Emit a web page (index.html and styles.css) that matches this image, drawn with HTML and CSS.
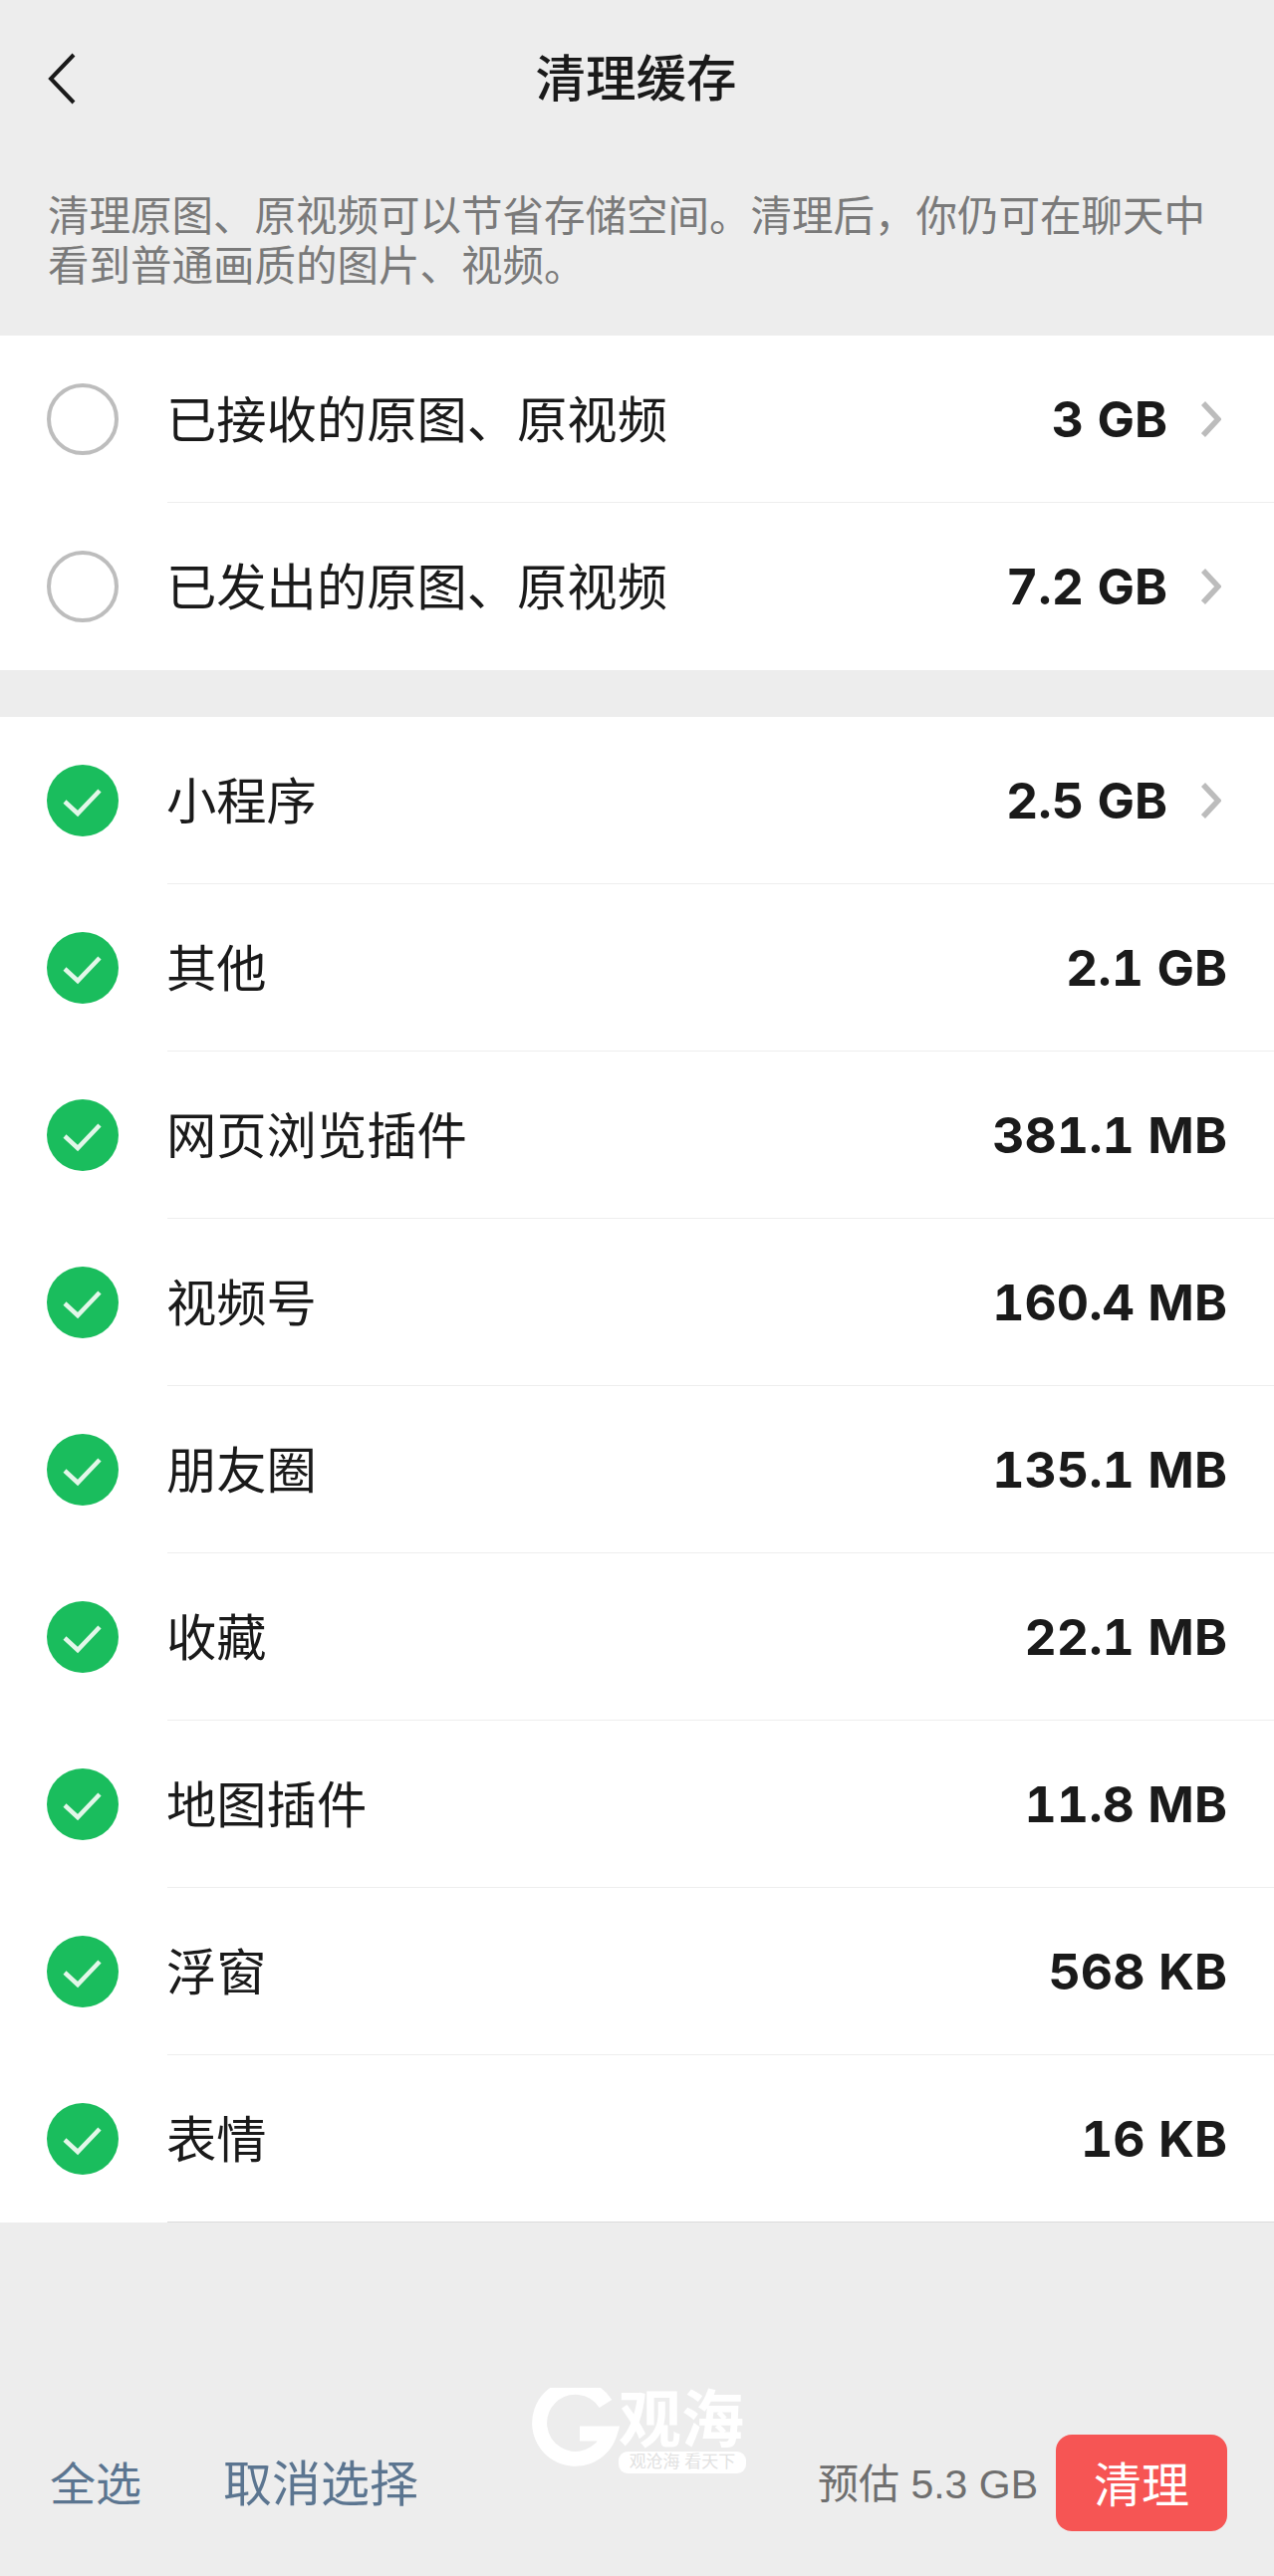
FILE: index.html
```html
<!DOCTYPE html>
<html>
<head>
    <meta charset="utf-8" />
    <title>清理缓存</title>
    <link rel="stylesheet" href="styles.css">
</head>
<body>
<svg class="defs" width="0" height="0">
    <symbol id="tick" viewBox="0 0 72 72">
        <circle cx="36" cy="36" r="36" fill="#1abd5d"/>
        <path d="M18 37 L31 49 L53 26" fill="none" stroke="#e2f7e9" stroke-width="4.5"/>
    </symbol>
    <symbol id="more" viewBox="0 0 20 36">
        <path d="M2 2 L17 18 L2 34" fill="none" stroke="#bcbcbc" stroke-width="5.5"/>
    </symbol>
</svg>
<div class="page">
    <div class="nav">
        <svg class="back" width="28" height="52" viewBox="0 0 28 52"><path d="M26 2 L3 26 L26 50" fill="none" stroke="#1a1a1a" stroke-width="4"/></svg>
        <div class="nav-title">清理缓存</div>
    </div>
    <div class="desc">清理原图、原视频可以节省存储空间。清理后，你仍可在聊天中看到普通画质的图片、视频。</div>

    <div class="group">
        <div class="row">
            <div class="radio"></div>
            <div class="row-body">
                <span class="name">已接收的原图、原视频</span>
                <span class="size">3 GB</span>
                <svg class="arrow"><use href="#more"/></svg>
            </div>
        </div>
        <div class="row">
            <div class="radio"></div>
            <div class="row-body last">
                <span class="name">已发出的原图、原视频</span>
                <span class="size">7.2 GB</span>
                <svg class="arrow"><use href="#more"/></svg>
            </div>
        </div>
    </div>

    <div class="group group-two">
        <div class="row">
            <svg class="check"><use href="#tick"/></svg>
            <div class="row-body">
                <span class="name">小程序</span>
                <span class="size">2.5 GB</span>
                <svg class="arrow"><use href="#more"/></svg>
            </div>
        </div>
        <div class="row">
            <svg class="check"><use href="#tick"/></svg>
            <div class="row-body"><span class="name">其他</span><span class="size">2.1 GB</span></div>
        </div>
        <div class="row">
            <svg class="check"><use href="#tick"/></svg>
            <div class="row-body"><span class="name">网页浏览插件</span><span class="size">381.1 MB</span></div>
        </div>
        <div class="row">
            <svg class="check"><use href="#tick"/></svg>
            <div class="row-body"><span class="name">视频号</span><span class="size">160.4 MB</span></div>
        </div>
        <div class="row">
            <svg class="check"><use href="#tick"/></svg>
            <div class="row-body"><span class="name">朋友圈</span><span class="size">135.1 MB</span></div>
        </div>
        <div class="row">
            <svg class="check"><use href="#tick"/></svg>
            <div class="row-body"><span class="name">收藏</span><span class="size">22.1 MB</span></div>
        </div>
        <div class="row">
            <svg class="check"><use href="#tick"/></svg>
            <div class="row-body"><span class="name">地图插件</span><span class="size">11.8 MB</span></div>
        </div>
        <div class="row">
            <svg class="check"><use href="#tick"/></svg>
            <div class="row-body"><span class="name">浮窗</span><span class="size">568 KB</span></div>
        </div>
        <div class="row">
            <svg class="check"><use href="#tick"/></svg>
            <div class="row-body end"><span class="name">表情</span><span class="size">16 KB</span></div>
        </div>
    </div>

    <div class="footer">
        <span class="link">全选</span>
        <span class="link link-second">取消选择</span>
        <span class="estimate">预估 5.3 GB</span>
        <div class="clean-btn">清理</div>
    </div>

    <div class="mark">
        <svg class="mark-g" width="90" height="86" viewBox="0 0 90 86">
            <path d="M76 16 A36 36 0 1 0 80 46 L50 46" fill="none" stroke="#fff" stroke-width="15"/>
        </svg>
        <div class="mark-right">
            <div class="mark-name">观海</div>
            <div class="mark-pill">观沧海 看天下</div>
        </div>
    </div>
</div>
</body>
</html>
```

FILE: styles.css
```css
body{
    margin: 0px;
    background: #ededed;
    font-family: "Liberation Sans", "Noto Sans CJK SC", sans-serif;
    color: #1a1a1a;
}
.defs{
    position: absolute;
}
.page{
    position: relative;
    display: flex;
    flex-direction: column;
    width: 1279px;
    height: 2587px;
    overflow: hidden;
}
.nav{
    position: relative;
    height: 160px;
    box-sizing: border-box;
    padding: 0 2px 10px 0;
    display: flex;
    align-items: center;
    justify-content: center;
}
.back{
    position: absolute;
    left: 48px;
    top: 53px;
}
.nav-title{
    font-size: 50.5px;
    font-weight: 500;
}
.desc{
    height: 177px;
    padding: 33px 48px 0 48px;
    box-sizing: border-box;
    font-size: 41.5px;
    line-height: 50px;
    color: #7a7a7a;
}
.group{
    background: #fff;
}
.group-two{
    margin-top: 47px;
}
.row{
    display: flex;
    align-items: center;
    padding-left: 47px;
}
.radio{
    width: 72px;
    height: 72px;
    box-sizing: border-box;
    border: 4px solid #bdbdbd;
    border-radius: 50%;
    flex: none;
}
.check{
    width: 72px;
    height: 72px;
    flex: none;
}
.row-body{
    flex: 1;
    height: 168px;
    box-sizing: border-box;
    margin-left: 49px;
    padding-right: 47px;
    display: flex;
    align-items: center;
    border-bottom: 1px solid #eeeeee;
}
.row-body.last{
    border-bottom: none;
}
.row-body.end{
    border-bottom: 1px solid #dcdcdc;
}
.name{
    flex: 1;
    padding-bottom: 6px;
    margin-left: -1px;
    font-size: 50.3px;
}
.size{
    font-family: Inter, "Liberation Sans", sans-serif;
    font-size: 50px;
    font-weight: 700;
    font-variant-numeric: tabular-nums;
}
.arrow{
    width: 20px;
    height: 36px;
    margin-left: 34px;
    margin-right: 6px;
}
.footer{
    margin-top: auto;
    height: 97px;
    margin-bottom: 45px;
    padding: 0 47px 0 50px;
    display: flex;
    align-items: center;
}
.link{
    padding-bottom: 6px;
    font-size: 46px;
    color: #5b7590;
}
.link-second{
    margin-left: 82px;
    font-size: 49px;
}
.estimate{
    margin-left: auto;
    padding-bottom: 6px;
    font-size: 41px;
    color: #6f6f6f;
}
.clean-btn{
    width: 172px;
    height: 97px;
    margin-left: 18px;
    border-radius: 16px;
    background: #f65554;
    color: #fff;
    font-size: 48px;
    line-height: 103px;
    text-align: center;
}
.mark{
    position: absolute;
    left: 532px;
    top: 2398px;
    display: flex;
}
.mark-right{
    margin-left: -1px;
    width: 128px;
}
.mark-name{
    color: #fff;
    font-size: 63px;
    font-weight: 700;
    line-height: 64px;
    height: 64px;
}
.mark-pill{
    background: #fff;
    color: #e2e2e2;
    border-radius: 9px;
    height: 22px;
    line-height: 22px;
    font-size: 17px;
    text-align: center;
}
```
